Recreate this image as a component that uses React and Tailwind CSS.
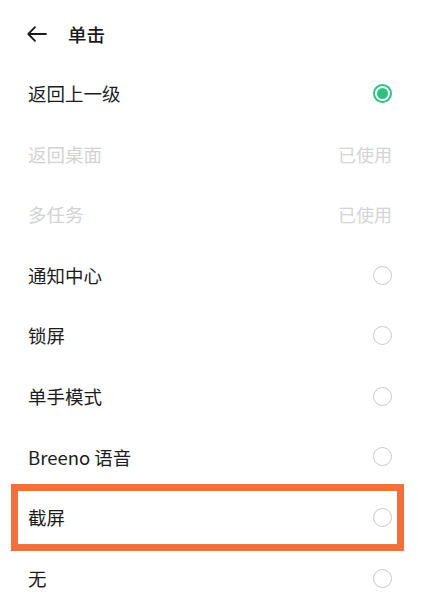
import { useState } from "react";

const options = [
  { label: "返回上一级", state: "checked" },
  { label: "返回桌面", state: "used" },
  { label: "多任务", state: "used" },
  { label: "通知中心" },
  { label: "锁屏" },
  { label: "单手模式" },
  { label: "Breeno 语音" },
  { label: "截屏", highlight: true },
  { label: "无" },
];

const Radio = ({ checked }) =>
  checked ? (
    <div className="w-[19px] h-[19px] rounded-full border-2 border-[#2fc27e] flex items-center justify-center">
      <div className="w-[11px] h-[11px] rounded-full bg-[#2fc27e]" />
    </div>
  ) : (
    <div className="w-[19px] h-[19px] rounded-full border-[1.5px] border-[#c9c9c9]" />
  );

export default function App() {
  const [selected, setSelected] = useState(0);

  return (
    <div
      className="w-[421px] h-[600px] bg-white overflow-hidden"
      style={{ fontFamily: '"Noto Sans CJK SC", "Noto Sans", sans-serif' }}
    >
      <div className="h-[63px] flex items-center pl-[27px] pt-[5px]">
        <svg width="20" height="16" viewBox="0 0 20 16" fill="none">
          <path
            d="M19 8H1.5M8 1.2L1.3 8L8 14.8"
            stroke="#1a1a1a"
            strokeWidth="1.8"
            strokeLinecap="round"
            strokeLinejoin="round"
          />
        </svg>
        <span className="ml-[21px] text-[18.5px] font-medium text-[#1a1a1a] leading-none">
          单击
        </span>
      </div>

      {options.map((opt, i) => {
        const used = opt.state === "used";
        return (
          <div
            key={opt.label}
            onClick={() => !used && setSelected(i)}
            className="relative h-[60.6px] flex items-center justify-between pl-[28px] pr-[29px]"
          >
            <span
              className={
                "text-[18.5px] leading-none " +
                (used ? "text-[#d2d2d2]" : "text-[#1c1c1c]")
              }
            >
              {opt.label}
            </span>
            {used ? (
              <span className="text-[18px] leading-none text-[#d4d4d4]">
                已使用
              </span>
            ) : (
              <Radio checked={selected === i} />
            )}
            {opt.highlight && (
              <div className="absolute left-[11px] right-[17px] -top-[3px] -bottom-[3px] border-[7px] border-[#f2703c]" />
            )}
          </div>
        );
      })}
    </div>
  );
}
